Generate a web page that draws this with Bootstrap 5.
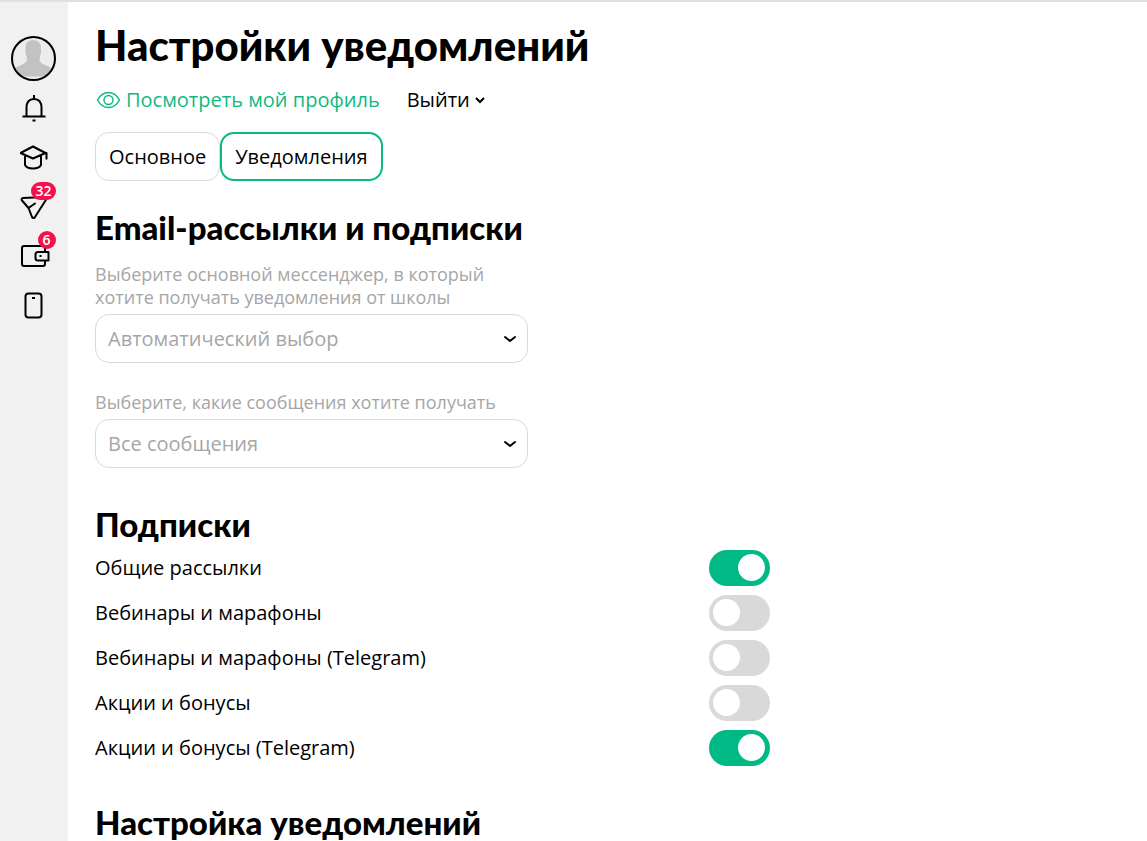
<!DOCTYPE html>
<html lang="ru">
<head>
<meta charset="utf-8">
<meta name="viewport" content="width=device-width, initial-scale=1">
<title>Настройки уведомлений</title>
<link href="https://cdn.jsdelivr.net/npm/bootstrap@5.3.0/dist/css/bootstrap.min.css" rel="stylesheet">
<style>
  body { font-family: "Open Sans", "Noto Sans", sans-serif; font-size: 20px; line-height: 28px; color: #000; border-top: 2px solid #e0e0e0; }
  .side-menu { width: 68px; flex: none; background: #f1f1f1; padding: 31px 0 0; }
  .side-menu a { display: flex; align-items: center; justify-content: center; width: 67px; height: 49px; color: #000; }
  .side-menu .profile-link { height: 51px; }
  .side-menu svg { display: block; }
  .icon-box { width: 28px; height: 28px; }
  .counter { position: absolute; top: -11px; right: -8px; min-width: 18px; height: 18px; padding: 0 4px; border-radius: 9px; background: #f50f4b; color: #fff; font-size: 14px; line-height: 18px; font-weight: 600; text-align: center; }
  .settings { padding: 20px 27px 0; }
  h1 { font-family: Lato, "Open Sans", sans-serif; font-size: 42px; line-height: 46px; font-weight: 900; margin: 0; }
  h2 { font-family: Lato, "Open Sans", sans-serif; font-size: 33px; line-height: 40px; font-weight: 900; margin: 0; }
  .profile-links { margin-top: 18px; gap: 27px; }
  .profile-links a { color: #10b981; }
  .plain-btn { border: 0; background: none; padding: 0; color: #000; }
  .tab-row { margin: 18px 0 26px; }
  .tab-btn { height: 49px; border: 1px solid #d9d9d9; border-radius: 14px; background: #fff; padding: 0 13px; color: #000; }
  .tab-btn.current { border: 2px solid #0ab885; }
  .form-block { max-width: 433px; }
  .form-block label { font-size: 18px; line-height: 23px; color: #a6a6a6; margin-bottom: 5px; }
  .form-block .form-select { height: 49px; border: 1px solid #d9d9d9; border-radius: 14px; font-size: 20px; color: #a6a6a6; padding: 0 40px 0 12px; background-image: url("data:image/svg+xml,%3csvg xmlns='http://www.w3.org/2000/svg' viewBox='0 0 12 8'%3e%3cpath fill='none' stroke='%23000' stroke-width='2' stroke-linecap='round' stroke-linejoin='round' d='M1 2 6 6l5-4'/%3e%3c/svg%3e"); background-size: 12px 8px; background-position: right 11px center; }
  .switch-list { max-width: 675px; gap: 9px; margin: 6px 0 36px; }
  .switch-list .form-check { min-height: 36px; margin: 0; padding: 0; }
  .switch-list .form-check-input { flex: none; width: 61px; height: 36px; margin: 0; border: 0; border-radius: 18px; background-color: #d9d9d9; background-size: 27px 27px; background-position: 4px 4px; background-repeat: no-repeat; background-image: url("data:image/svg+xml,%3csvg xmlns='http://www.w3.org/2000/svg' viewBox='0 0 27 27'%3e%3ccircle cx='13.500' cy='13.500' r='13.500' fill='%23fff'/%3e%3c/svg%3e"); }
  .switch-list .form-check-input:checked { background-color: #00b985; background-position: 29px 4px; background-image: url("data:image/svg+xml,%3csvg xmlns='http://www.w3.org/2000/svg' viewBox='0 0 27 27'%3e%3ccircle cx='13.500' cy='13.500' r='13.500' fill='%23fff'/%3e%3c/svg%3e"); }
</style>
</head>
<body>
<div class="d-flex min-vh-100">
  <nav class="side-menu" aria-label="Меню">
    <a href="#" class="profile-link" aria-label="Профиль">
      <svg width="45" height="45" viewBox="0 0 45 45"><defs><clipPath id="face"><circle cx="22.500" cy="22.500" r="20.500"/></clipPath></defs><circle cx="22.500" cy="22.500" r="21.500" fill="#ececec"/><path clip-path="url(#face)" fill="#c2c2c2" d="M22 4c5 0 8 3 8 8 0 1 .5 4-.5 6.500-.5 2.500-1 4-1 5.500 1 4 5 4.500 9 6.500 3 1.500 5 3.500 5 6v4H2v-4c0-3 2-4.500 5-6 4-2 8-3 9-6.500 0-1.500-.5-3-1-5.500-1-2.500-.5-5.500-.5-6.500 0-5 3-8 7.500-8z"/><circle cx="22.500" cy="22.500" r="21.500" fill="none" stroke="#000" stroke-width="2"/></svg>
    </a>
    <a href="#" aria-label="Уведомления">
      <svg class="icon-box" viewBox="0 0 28 28" fill="none" stroke="#000" stroke-width="2"><path d="M14 0v4M6.500 21v-8c0-6 3-9 7.500-9s7.500 3 7.500 9v8M2.500 21.500h23M12.500 25.500h3"/></svg>
    </a>
    <a href="#" aria-label="Обучение">
      <svg class="icon-box" viewBox="0 0 28 28" fill="none" stroke="#000" stroke-width="2" stroke-linejoin="round"><path d="M.5 9 13 2.500l12.500 6.500L13 14.500zM5 12v9c1 2 4 3.500 8 3.500s7-1.500 8-3.500v-9M25.500 9h1v6.500"/></svg>
    </a>
    <a href="#" aria-label="Сообщения">
      <span class="position-relative"><svg class="icon-box" viewBox="0 0 28 28" fill="none" stroke="#000" stroke-width="2" stroke-linecap="round" stroke-linejoin="round"><path d="M3 5 25.500 4c1 0 1.500 1 1 2L15 24c-.5 1.200-2.500 1.200-3 0L8.500 15 2 7.500C1 6.500 2 5 3 5zM8.500 15l6.500-4.500"/></svg><span class="counter">32</span></span>
    </a>
    <a href="#" aria-label="Покупки">
      <span class="position-relative"><svg class="icon-box overflow-visible" viewBox="0 0 28 28" fill="none" stroke="#000" stroke-width="2" stroke-linejoin="round"><path d="M25 9V6q0-2-2-2H4Q2 4 2 6v16q0 2 2 2h19q2 0 2-2v-3"/><path d="M28.500 10H18q-2.500 0-2.500 2.500v3.500q0 2.500 2.500 2.500h10.500z"/><path d="M19.500 14h2"/></svg><span class="counter">6</span></span>
    </a>
    <a href="#" aria-label="Приложение">
      <svg class="icon-box" viewBox="0 0 28 28" fill="none" stroke="#000" stroke-width="2"><rect x="5.500" y="2.500" width="16" height="24" rx="3"/><path d="M12 7h3"/></svg>
    </a>
  </nav>
  <main class="settings flex-grow-1">
    <h1>Настройки уведомлений</h1>
    <div class="profile-links d-flex align-items-center flex-wrap">
      <a href="#" class="d-flex align-items-center gap-1 text-decoration-none"><svg width="27" height="20" viewBox="0 0 27 20" fill="none" stroke="#10b981" stroke-width="1.500"><path d="M2.500 10C8 0 19 0 24.500 10 19 20 8 20 2.500 10z"/><circle cx="13.500" cy="10" r="4.500"/></svg>Посмотреть мой профиль</a>
      <button type="button" class="plain-btn d-flex align-items-center gap-1">Выйти<svg width="12" height="8" viewBox="0 0 12 8" fill="none" stroke="#000" stroke-width="2"><path d="m2 2 4 4 4-4"/></svg></button>
    </div>
    <div class="tab-row d-flex">
      <button type="button" class="tab-btn">Основное</button>
      <button type="button" class="tab-btn current">Уведомления</button>
    </div>
    <h2>Email-рассылки и подписки</h2>
    <div class="form-block pt-3">
      <label for="messenger" class="d-block">Выберите основной мессенджер, в который хотите получать уведомления от школы</label>
      <select id="messenger" class="form-select"><option>Автоматический выбор</option></select>
    </div>
    <div class="form-block pt-4 mt-1 mb-3 pb-3">
      <label for="kinds" class="d-block">Выберите, какие сообщения хотите получать</label>
      <select id="kinds" class="form-select"><option>Все сообщения</option></select>
    </div>
    <h2 class="pt-1">Подписки</h2>
    <div class="switch-list d-flex flex-column">
      <div class="form-check form-switch d-flex align-items-center justify-content-between"><label for="s1">Общие рассылки</label><input class="form-check-input" type="checkbox" role="switch" id="s1" checked></div>
      <div class="form-check form-switch d-flex align-items-center justify-content-between"><label for="s2">Вебинары и марафоны</label><input class="form-check-input" type="checkbox" role="switch" id="s2"></div>
      <div class="form-check form-switch d-flex align-items-center justify-content-between"><label for="s3">Вебинары и марафоны (Telegram)</label><input class="form-check-input" type="checkbox" role="switch" id="s3"></div>
      <div class="form-check form-switch d-flex align-items-center justify-content-between"><label for="s4">Акции и бонусы</label><input class="form-check-input" type="checkbox" role="switch" id="s4"></div>
      <div class="form-check form-switch d-flex align-items-center justify-content-between"><label for="s5">Акции и бонусы (Telegram)</label><input class="form-check-input" type="checkbox" role="switch" id="s5" checked></div>
    </div>
    <h2>Настройка уведомлений</h2>
  </main>
</div>
<script src="https://cdn.jsdelivr.net/npm/bootstrap@5.3.0/dist/js/bootstrap.bundle.min.js"></script>
</body>
</html>
